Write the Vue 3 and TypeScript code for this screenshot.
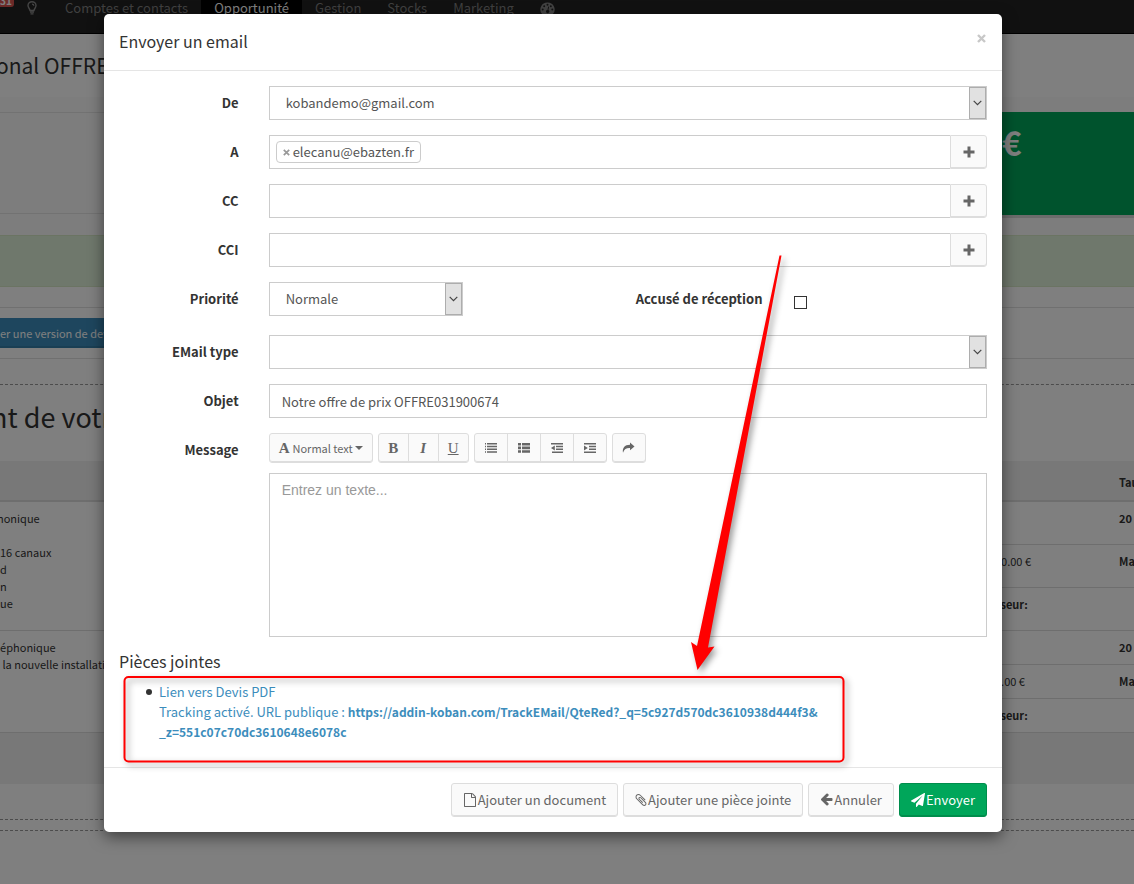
<script setup lang="ts">
import { ref } from 'vue'

interface Recipient {
  id: string
  label: string
  tags: string[]
}

const sender = ref('kobandemo@gmail.com')
const priority = ref('Normale')
const template = ref('')
const subject = ref('Notre offre de prix OFFRE031900674')
const message = ref('')
const receipt = ref(false)

const recipients = ref<Recipient[]>([
  { id: 'to', label: 'A', tags: ['elecanu@ebazten.fr'] },
  { id: 'cc', label: 'CC', tags: [] },
  { id: 'bcc', label: 'CCI', tags: [] },
])

const menu = [
  { label: 'Comptes et contacts', active: false },
  { label: 'Opportunité', active: true },
  { label: 'Gestion', active: false },
  { label: 'Stocks', active: false },
  { label: 'Marketing', active: false },
]

function removeTag(r: Recipient, tag: string) {
  r.tags = r.tags.filter((t) => t !== tag)
}
</script>

<template>
  <div class="app">
    <div class="page">
      <nav class="navbar">
        <span class="badge">31</span>
        <svg class="bulb" width="10" height="14" viewBox="0 0 10 14">
          <path d="M3 9.5C3 7.8 1 7 1 4.6A4 3.9 0 0 1 9 4.6C9 7 7 7.8 7 9.5Z" fill="none" stroke="#8a8a8a" stroke-width="1.4" />
          <path d="M5 3.2q1.8 0 1.8 1.6M3 11h4M3.5 12.8h3" fill="none" stroke="#8a8a8a" stroke-width="1.3" />
        </svg>
        <a v-for="m in menu" :key="m.label" href="#" class="nav-link" :class="{ active: m.active }">{{ m.label }}</a>
        <a href="#" class="nav-link gauge" aria-label="Tableau de bord">
          <svg width="15" height="14" viewBox="0 0 15 14">
            <path fill="#858585" d="M7.500 0.500A7 7 0 0 0 1.700 11.600q.4.500 1 .5h9.600q.6 0 1-.5A7 7 0 0 0 7.500.500z" />
            <g fill="#222">
              <circle cx="2.700" cy="7.500" r="1" /><circle cx="4.200" cy="4.200" r="1" /><circle cx="7.500" cy="2.700" r="1" />
              <circle cx="10.800" cy="4.200" r="1" /><circle cx="12.300" cy="7.500" r="1" />
              <path d="M8.200 4.600l.9.200-.7 3.300a1.600 1.600 0 1 1-.9-.2z" />
            </g>
          </svg>
        </a>
      </nav>
      <div class="page-title">onal OFFRE</div>
      <div class="summary">
        <div class="summary-info"></div>
        <div class="summary-total">€</div>
      </div>
      <div class="notice"></div>
      <div class="actions">
        <a href="#" class="version-btn">er une version de devis</a>
      </div>
      <section class="quote">
        <div class="quote-title">nt de votre</div>
        <table class="lines">
          <thead>
            <tr><th class="c-name"></th><th class="c-price"></th><th class="c-rate">Tau</th></tr>
          </thead>
          <tbody>
            <tr class="tall">
              <td rowspan="3">honique<br /><br />16 canaux<br />d<br />n<br />ue</td>
              <td><b>0</b></td><td><b>20</b></td>
            </tr>
            <tr class="tall"><td>00.00 €</td><td><b>Ma</b></td></tr>
            <tr class="tall"><td><b>sseur:</b></td><td></td></tr>
            <tr>
              <td rowspan="3">léphonique<br />&nbsp;la nouvelle installation</td>
              <td></td><td><b>20</b></td>
            </tr>
            <tr><td>0.00 €</td><td><b>Ma</b></td></tr>
            <tr><td><b>sseur:</b></td><td></td></tr>
          </tbody>
          <tfoot>
            <tr><td colspan="3"></td></tr>
          </tfoot>
        </table>
      </section>
      <div class="separator"></div>
    </div>

    <div class="overlay">
      <form class="modal" role="dialog" aria-labelledby="dlg-title" @submit.prevent>
        <header class="modal-header">
          <h1 id="dlg-title">Envoyer un email</h1>
          <button type="button" class="close" aria-label="Fermer">
            <svg width="9" height="9" viewBox="0 0 9 9"><path d="M1 1l7 7M8 1l-7 7" stroke="#c8c8c8" stroke-width="2.400" /></svg>
          </button>
        </header>

        <div class="modal-body">
          <div class="row">
            <label class="lbl" for="from">De</label>
            <div class="field">
              <div class="select">
                <select id="from" v-model="sender"><option>kobandemo@gmail.com</option></select>
                <span class="drop"><svg width="9" height="6" viewBox="0 0 9 6"><path d="M.7.800l3.800 3.800L8.300.800" fill="none" stroke="#444" stroke-width="1.200" /></svg></span>
              </div>
            </div>
          </div>

          <div v-for="r in recipients" :key="r.id" class="row">
            <label class="lbl" :for="r.id">{{ r.label }}</label>
            <div class="field group">
              <div class="tags">
                <span v-for="t in r.tags" :key="t" class="tag">
                  <button type="button" aria-label="Retirer" @click="removeTag(r, t)">
                    <svg width="7" height="7" viewBox="0 0 7 7"><path d="M.8.800l5.400 5.400M6.200.800L.8 6.200" stroke="#999" stroke-width="1.700" /></svg>
                  </button>{{ t }}
                </span>
                <input :id="r.id" type="text" />
              </div>
              <button type="button" class="add" aria-label="Ajouter">
                <svg width="12" height="12" viewBox="0 0 12 12"><path d="M4.500.500h3v4h4v3h-4v4h-3v-4h-4v-3h4z" fill="#666" /></svg>
              </button>
            </div>
          </div>

          <div class="row priority">
            <label class="lbl" for="prio">Priorité</label>
            <div class="field quarter">
              <div class="select">
                <select id="prio" v-model="priority"><option>Normale</option></select>
                <span class="drop"><svg width="9" height="6" viewBox="0 0 9 6"><path d="M.7.800l3.800 3.800L8.300.800" fill="none" stroke="#444" stroke-width="1.200" /></svg></span>
              </div>
            </div>
            <label class="lbl third" for="receipt">Accusé de réception</label>
            <div class="field check"><input id="receipt" v-model="receipt" type="checkbox" /></div>
          </div>

          <div class="row">
            <label class="lbl" for="tpl">EMail type</label>
            <div class="field">
              <div class="select">
                <select id="tpl" v-model="template"><option value=""></option></select>
                <span class="drop"><svg width="9" height="6" viewBox="0 0 9 6"><path d="M.7.800l3.800 3.800L8.300.800" fill="none" stroke="#444" stroke-width="1.200" /></svg></span>
              </div>
            </div>
          </div>

          <div class="row">
            <label class="lbl" for="subject">Objet</label>
            <div class="field"><input id="subject" v-model="subject" class="control" type="text" /></div>
          </div>

          <div class="row">
            <label class="lbl" for="msg">Message</label>
            <div class="field">
              <div class="toolbar">
                <div class="btns">
                  <button type="button" class="style-btn"><span class="glyph">A</span>Normal text<i class="caret"></i></button>
                </div>
                <div class="btns letters">
                  <button type="button" aria-label="Gras"><span class="glyph">B</span></button>
                  <button type="button" aria-label="Italique"><span class="glyph it">I</span></button>
                  <button type="button" aria-label="Souligné"><span class="glyph un">U</span></button>
                </div>
                <div class="btns icons">
                  <button type="button" aria-label="Liste à puces">
                    <svg width="12" height="10" viewBox="0 0 12 10"><path fill="#666" d="M0 0h1v1.500H0zM2 0h10v1.500H2zM0 2.700h1v1.500H0zM2 2.700h10v1.500H2zM0 5.500h1V7H0zM2 5.500h10V7H2zM0 8.300h1v1.500H0zM2 8.300h10v1.500H2z" /></svg>
                  </button>
                  <button type="button" aria-label="Liste numérotée">
                    <svg width="12" height="10" viewBox="0 0 12 10"><path fill="#666" d="M0 0h3v2.600H0zM4 0h8v2.600H4zM0 3.600h3v2.600H0zM4 3.600h8v2.600H4zM0 7.200h3v2.600H0zM4 7.200h8v2.600H4z" /></svg>
                  </button>
                  <button type="button" aria-label="Diminuer le retrait">
                    <svg width="12" height="10" viewBox="0 0 12 10"><path fill="#666" d="M0 0h12v1.500H0zM5 2.800h7v1.500H5zM5 5.600h7v1.500H5zM1 8.400h11v1.500H1zM3.800 2.400v5L0 4.900z" /></svg>
                  </button>
                  <button type="button" aria-label="Augmenter le retrait">
                    <svg width="12" height="10" viewBox="0 0 12 10"><path fill="#666" d="M0 0h12v1.500H0zM5 2.800h7v1.500H5zM5 5.600h7v1.500H5zM0 8.400h12v1.500H0zM0 2.400v5l3.800-2.500z" /></svg>
                  </button>
                </div>
                <div class="btns icons">
                  <button type="button" aria-label="Insérer un lien">
                    <svg width="13" height="12" viewBox="0 0 13 12"><path fill="#666" d="M8 .500L12.500 4.400 8 8.300V6C4.500 5.800 2.300 7 1 10.800.2 6 2.500 2.900 8 2.800z" /></svg>
                  </button>
                </div>
              </div>
              <textarea id="msg" v-model="message" placeholder="Entrez un texte..."></textarea>
            </div>
          </div>

          <h2>Pièces jointes</h2>
          <ul class="files">
            <li>
              <a href="#">Lien vers Devis PDF</a><br />
              <a href="#">Tracking activé. URL publique : <b>https://addin-koban.com/TrackEMail/QteRed?_q=5c927d570dc3610938d444f3&amp;<wbr />_z=551c07c70dc3610648e6078c</b></a>
            </li>
          </ul>
        </div>

        <footer class="modal-footer">
          <button type="button" class="btn">
            <svg width="14" height="14" viewBox="0 0 1792 1792"><path fill="#666" d="M1596 380q28 28 48 76t20 88v1152q0 40-28 68t-68 28h-1344q-40 0-68-28t-28-68v-1600q0-40 28-68t68-28h896q40 0 88 20t76 48zm-444-244v376h376q-10-29-22-41l-313-313q-12-12-41-22zm384 1528v-1024h-416q-40 0-68-28t-28-68v-416h-768v1536h1280z" /></svg>Ajouter un document
          </button>
          <button type="button" class="btn">
            <svg width="12" height="14" viewBox="130 100 1536 1600"><path fill="#666" d="M1596 1385q0 117-79 196t-196 79q-135 0-235-100l-777-776q-113-115-113-271 0-159 110-270t269-111q158 0 273 113l605 606q10 10 10 22 0 16-30.500 46.500t-46.500 30.500q-13 0-23-10l-606-607q-79-77-181-77-106 0-179 75t-73 181q0 105 76 181l776 777q63 63 145 63 64 0 106-42t42-106q0-82-63-145l-581-581q-26-24-60-24-29 0-48 19t-19 48q0 32 25 59l410 410q10 10 10 22 0 16-31 47t-47 31q-12 0-22-10l-410-410q-63-61-63-149 0-82 57-139t139-57q88 0 149 63l581 581q100 98 100 235z" /></svg>Ajouter une pièce jointe
          </button>
          <button type="button" class="btn">
            <svg width="13" height="14" viewBox="64 128 1664 1792"><path fill="#666" d="M1664 896v128q0 53-32.500 90.500t-84.500 37.500h-704l293 294q38 36 38 90t-38 90l-75 76q-37 37-90 37-52 0-91-37l-651-652q-37-37-37-90 0-52 37-91l651-650q38-38 91-38 52 0 90 38l75 74q38 38 38 91t-38 91l-293 293h704q52 0 84.500 37.500t32.500 90.500z" /></svg>Annuler
          </button>
          <button type="submit" class="btn primary">
            <svg width="14" height="14" viewBox="0 0 1792 1792"><path fill="#fff" d="M1764 11q33 24 27 64l-256 1536q-5 29-32 45-14 8-31 8-11 0-24-5l-453-185-242 295q-18 23-49 23-13 0-22-4-19-7-30.500-23.500t-11.500-36.500v-349l864-1059-1069 925-395-162q-37-14-40-55-2-40 32-59l1664-960q15-9 32-9 20 0 36 11z" /></svg>Envoyer
          </button>
        </footer>

        <svg class="annotation" width="898" height="818" viewBox="104 14 898 818" aria-hidden="true">
          <rect x="124.500" y="677" width="719" height="84.500" rx="4" fill="none" stroke="#f00" stroke-width="2" />
          <path fill="#f00" d="M779.500 255.500h2L708 647.500l6.500-1L697.500 670 691 642l6 4z" />
        </svg>
      </form>
    </div>
  </div>
</template>

<style>
body {
  margin: 0;
}
</style>

<style scoped>
.app,
.app * {
  box-sizing: border-box;
}
.app {
  position: relative;
  min-height: 100vh;
  overflow: hidden;
  background: #fff;
  color: #333;
  font-family: "Noto Sans CJK SC", "Noto Sans", sans-serif;
  font-size: 13px;
  line-height: 20px;
}
button,
input,
select,
textarea {
  font: inherit;
  color: inherit;
  margin: 0;
}
a {
  color: #3c8dbc;
  text-decoration: none;
}

/* page behind the dialog */
.navbar {
  display: flex;
  height: 34px;
  background: #222;
  border-bottom: 1px solid #000;
  line-height: 15px;
}
.badge {
  width: 14px;
  height: 7px;
  overflow: hidden;
  border-radius: 0 0 3px 0;
  background: #d9534f;
  color: #fff;
  font-size: 10px;
  font-weight: bold;
  line-height: 2px;
}
.bulb {
  margin: 1px 15px 0 13px;
}
.nav-link {
  padding: 0 13px;
  color: #808080;
}
.nav-link.active {
  background: #000;
  color: #fff;
}
.gauge {
  padding-top: 2px;
}
.page-title {
  height: 63px;
  padding-top: 15px;
  font-size: 21px;
  line-height: 32px;
  text-indent: -4px;
  white-space: nowrap;
}
.summary {
  display: flex;
  padding: 15px 0 20px;
  background: #fbfbfb;
}
.summary-info {
  flex: 1;
  height: 102px;
  border-top: 1px solid #e4e4e4;
  border-bottom: 1px solid #e4e4e4;
}
.summary-total {
  width: 162px;
  height: 103px;
  padding: 6px 30px;
  background: #00a65a;
  box-shadow: 0 3px 0 #d8d8d8;
  color: #fff;
  font-size: 33px;
  font-weight: bold;
  line-height: 48px;
}
.notice {
  height: 52px;
  background: #dff0d8;
  border: solid #d6e9c6;
  border-width: 1px 0;
}
.actions {
  margin-top: 20px;
  padding: 10px 0;
  border: solid #e0e0e0;
  border-width: 1px 0;
}
.version-btn {
  display: block;
  width: 140px;
  height: 30px;
  overflow: hidden;
  background: #3c8dbc;
  box-shadow: inset 0 -2px 0 rgba(0, 0, 0, 0.1);
  color: #fff;
  font-size: 11px;
  line-height: 31px;
  white-space: nowrap;
}
.quote {
  margin-top: 25px;
  padding-bottom: 35px;
  border: dashed #999;
  border-width: 1px 0;
}
.quote-title {
  height: 76px;
  padding-top: 12px;
  font-size: 27px;
  line-height: 40px;
  text-indent: -9px;
}
.lines {
  width: 100%;
  table-layout: fixed;
  border-collapse: collapse;
  font-size: 11px;
  line-height: 17px;
}
.c-name {
  width: auto;
}
.c-price {
  width: 124px;
}
.c-rate {
  width: 15px;
}
.lines th {
  height: 40px;
  padding: 4px 0 0;
  background: #f0f0f0;
  border-bottom: 2px solid #ddd;
  text-align: left;
  white-space: nowrap;
}
.lines td {
  height: 34px;
  padding: 8px 0 0;
  border-top: 1px solid #ddd;
  vertical-align: top;
  white-space: nowrap;
}
.lines td[rowspan] {
  text-indent: -3px;
}
.lines .tall td {
  height: 43px;
}
.lines tfoot td {
  height: 52px;
  background: #f0f0f0;
}
.separator {
  margin-top: 10px;
  border-top: 1px dashed #999;
}

/* dialog */
.overlay {
  position: absolute;
  inset: 0;
  padding: 14px 132px 52px 104px;
  background: rgba(0, 0, 0, 0.5);
}
.modal {
  position: relative;
  background: #fff;
  border-radius: 5px;
  box-shadow: 0 5px 15px rgba(0, 0, 0, 0.5);
}
.modal-header {
  display: flex;
  justify-content: space-between;
  align-items: flex-start;
  height: 57px;
  padding: 15px;
  border-bottom: 1px solid #e5e5e5;
}
h1,
h2 {
  margin: 0;
  font-size: 16px;
  font-weight: normal;
  line-height: 24px;
}
h2 {
  margin-bottom: 12px;
  line-height: 18px;
}
.close {
  display: flex;
  padding: 5px 1px;
  border: 0;
  background: none;
}
.modal-body {
  padding: 15px;
}
.row {
  display: flex;
  margin: 0 -15px 15px;
}
.row.priority {
  margin-bottom: 19px;
}
.lbl {
  flex: none;
  width: 16.6667%;
  padding: 7px 15px 0;
  font-weight: bold;
  text-align: right;
}
.lbl.third {
  width: 33.3333%;
}
.field {
  flex: 1;
  min-width: 0;
  padding: 0 15px;
}
.field.quarter {
  flex: none;
  width: 25%;
}
.field.group {
  display: flex;
}
.select {
  position: relative;
}
.select select,
.control {
  display: block;
  width: 100%;
  height: 34px;
  padding: 0 12px;
  appearance: none;
  background: #fff;
  border: 1px solid #ccc;
  border-radius: 0;
  color: #555;
}
.select select {
  padding: 0 16px;
}
.drop {
  position: absolute;
  top: 1px;
  right: 1px;
  bottom: 1px;
  display: flex;
  align-items: center;
  justify-content: center;
  width: 17px;
  background: #e1e1e1;
  border: 1px solid #adadad;
  pointer-events: none;
}
.tags {
  flex: 1;
  display: flex;
  gap: 5px;
  height: 34px;
  padding: 5px 6px;
  border: 1px solid #ccc;
  border-right: 0;
  color: #555;
}
.tags input {
  flex: 1;
  min-width: 0;
  border: 0;
  outline: 0;
  padding: 0;
}
.tag {
  display: flex;
  align-items: center;
  padding: 0 6px;
  border: 1px solid #ccc;
  border-radius: 4px;
}
.tag button {
  display: flex;
  padding: 0;
  margin-right: 3px;
  border: 0;
  background: none;
}
.add {
  display: flex;
  align-items: center;
  justify-content: center;
  width: 37px;
  height: 34px;
  padding: 0;
  background: #fafafa;
  border: 1px solid #ddd;
  border-radius: 0 3px 3px 0;
  box-shadow: inset 0 -1px 0 #ddd;
}
.check {
  padding-top: 14px;
}
.check input {
  display: block;
  width: 13px;
  height: 13px;
  margin-left: 2px;
  appearance: none;
  background: #fff;
  border: 1px solid #333;
}
.check input:checked {
  background: #333;
}
.toolbar {
  display: flex;
  gap: 5px;
  margin-bottom: 10px;
}
.btns {
  display: flex;
}
.btns button {
  display: flex;
  align-items: center;
  justify-content: center;
  height: 30px;
  margin-left: -1px;
  padding: 0 9px;
  background: #fafafa;
  border: 1px solid #ddd;
  box-shadow: inset 0 -1px 0 #ddd;
  color: #666;
  font-size: 11px;
}
.btns button:first-child {
  margin-left: 0;
  border-radius: 3px 0 0 3px;
}
.btns button:last-child {
  border-radius: 0 3px 3px 0;
}
.btns button:only-child {
  border-radius: 3px;
}
.letters button {
  width: 31px;
  padding: 0;
}
.icons button {
  width: 34px;
  padding: 0;
}
.glyph {
  font-family: "Liberation Serif", serif;
  font-size: 15px;
  font-weight: bold;
}
.style-btn .glyph {
  margin-right: 3px;
}
.it {
  font-style: italic;
}
.un {
  font-weight: normal;
  text-decoration: underline;
}
.caret {
  margin-left: 2px;
  border: 4px solid transparent;
  border-top-color: #666;
  border-bottom: 0;
}
textarea {
  display: block;
  width: 100%;
  height: 164px;
  padding: 6px 12px;
  border: 1px solid #ccc;
  border-radius: 0;
  outline: 0;
  resize: none;
  font-family: "Liberation Sans", Arial, sans-serif;
  font-size: 14px;
}
textarea::placeholder {
  color: #999;
}
.files {
  margin: 0 0 10px;
  padding-left: 40px;
  list-style: none;
}
.files li {
  position: relative;
}
.files li::before {
  content: "";
  position: absolute;
  top: 7px;
  left: -13px;
  width: 6px;
  height: 6px;
  border-radius: 50%;
  background: #333;
}
.files b {
  font-size: 12px;
}
.modal-footer {
  display: flex;
  flex-wrap: wrap;
  justify-content: flex-end;
  gap: 5px;
  padding: 15px;
  border-top: 1px solid #e5e5e5;
}
.btn {
  display: flex;
  align-items: center;
  gap: 1px;
  height: 34px;
  padding: 0 11px;
  background: #fafafa;
  border: 1px solid #ddd;
  border-radius: 3px;
  box-shadow: inset 0 -1px 0 #ddd;
  color: #666;
}
.btn.primary {
  background: #00a65a;
  border-color: #008d4c;
  box-shadow: inset 0 -1px 0 #008d4c;
  color: #fff;
}
.annotation {
  position: absolute;
  top: 0;
  left: 0;
  pointer-events: none;
  filter: drop-shadow(3px 3px 3px rgba(0, 0, 0, 0.4));
}
</style>
